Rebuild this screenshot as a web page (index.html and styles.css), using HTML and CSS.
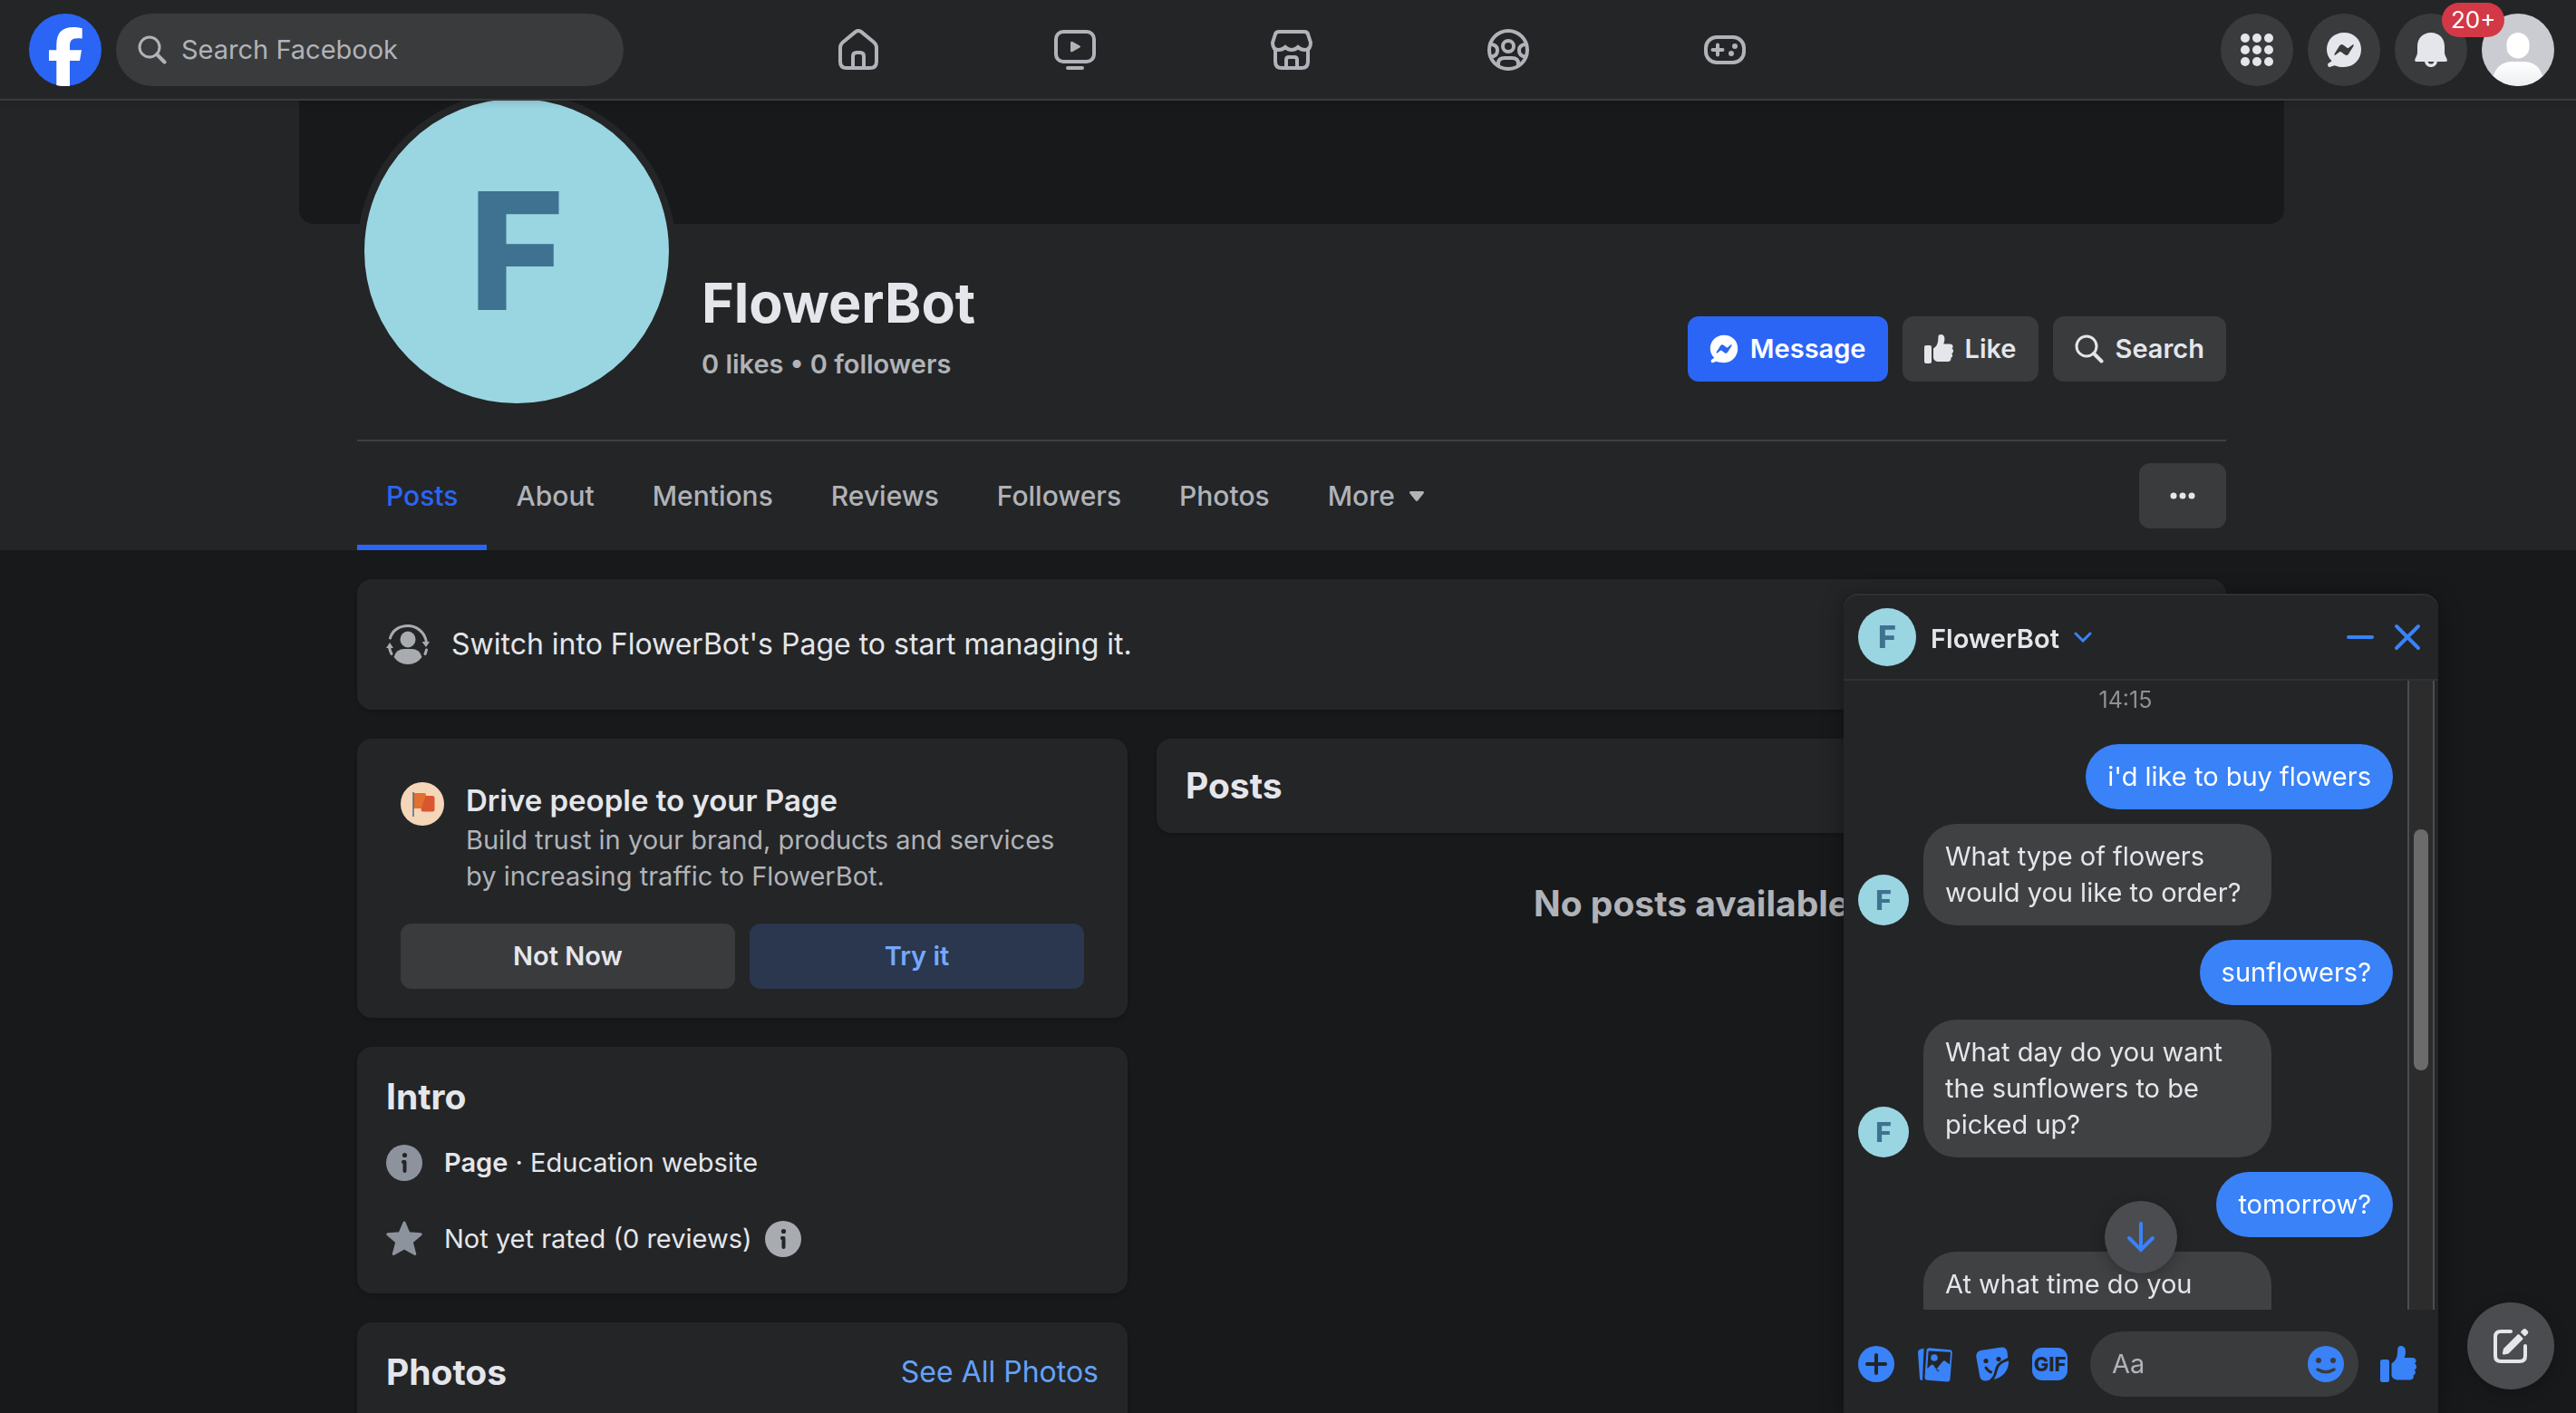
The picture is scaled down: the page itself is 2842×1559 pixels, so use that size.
FILE: index.html
```html
<!DOCTYPE html>
<html lang="en">
<head>
<meta charset="utf-8">
<meta name="viewport" content="width=device-width, initial-scale=1">
<title>FlowerBot | Facebook</title>
<link rel="stylesheet" href="styles.css">
</head>
<body>
<svg class="defs" aria-hidden="true">
  <symbol id="i-search" viewBox="0 0 32 32"><circle cx="13" cy="13" r="11" fill="none" stroke="currentColor" stroke-width="3"/><path d="M21 21l8.500 8.500" stroke="currentColor" stroke-width="4" stroke-linecap="round"/></symbol>
  <symbol id="i-messenger" viewBox="0 0 40 40"><path fill="currentColor" fill-rule="evenodd" d="M20 1C9 1 1 9 1 19.500c0 5.500 2.200 9.500 5.600 12.800L2 35.500l.5 2.500q.3 1.200 1.600 1l5.600-1.700C12.800 38.700 16.300 39 20 39c11 0 19-8.600 19-19.500S31 1 20 1ZM9.500 24.400l5.600-8.900a3 3 0 0 1 4.300-.8l4 3a1.500 1.500 0 0 0 1.700 0l4.300-3.300c.8-.6 1.800.3 1.300 1.200l-5.600 8.800a3 3 0 0 1-4.300.8l-4-3a1.500 1.500 0 0 0-1.700 0l-4.300 3.400c-.8.600-1.800-.3-1.300-1.200Z"/></symbol>
  <symbol id="i-thumb" viewBox="0 0 40 40"><rect x="0" y="15" width="10" height="25" rx="2.500" fill="currentColor"/><path fill="currentColor" d="M12.500 19.500c4.500-3 6-6.500 6.500-11.500l.3-5C19.500 1 21 0 22.700 0c3.500 0 5.300 2.500 5.300 6 0 2.500-.6 5-1.400 7H35c3 0 4.500 1.500 4.500 3.500 0 1.400-.7 2.400-1.500 3 1.300.7 2 1.900 2 3.400 0 1.800-1 3-2.300 3.500.8.700 1.200 1.600 1.200 2.700 0 1.700-1 2.900-2.400 3.300.2.500.3 1 .3 1.500 0 2-1.600 3.600-4 3.600H20c-4.500 0-7.500-2.200-7.500-6Z"/></symbol>
  <symbol id="i-info" viewBox="0 0 40 40"><circle cx="20" cy="20" r="20" fill="currentColor"/><g class="cut-fill"><circle cx="20.500" cy="11.500" r="2.600"/><path d="M18.500 17h2q2 0 2 2v10q0 2-2 2t-2-2v-8q-1.500 0-1.500-2t1.500-2Z"/></g></symbol>
</svg>

<header class="topbar">
  <div class="topbar-left">
    <a class="logo" href="#" aria-label="Facebook">
      <svg viewBox="0 0 80 80"><circle cx="40" cy="40" r="40" fill="#2b65f6"/><path fill="#fff" d="M30.300 79V52H22V40.200h8.300v-5.400C30.300 21 36.500 15 48.700 15c3.200 0 7 .5 10 1.200V27.500c-1.500-.2-3.500-.3-5.500-.3-6 0-8.200 2.800-8.200 8.500v4.500h13L56 52H45v27.700q-7.500 1-14.700-.7Z"/></svg>
    </a>
    <label class="search"><svg class="ico-search"><use href="#i-search"/></svg><input type="search" placeholder="Search Facebook" aria-label="Search Facebook"></label>
  </div>
  <nav class="topnav" aria-label="Main">
    <a href="#" aria-label="Home"><svg width="44" height="46" viewBox="0 0 44 46"><path d="M18.500 3.400 5 14.500Q2 17 2 20.500V36q0 7 7 7h26q7 0 7-7V20.500q0-3.500-3-6L25.500 3.400q-3.500-2.800-7 0Z"/><path d="M16 43V30q0-4 4-4h4q4 0 4 4v13"/></svg></a>
    <a href="#" aria-label="Video"><svg width="46" height="44" viewBox="0 0 46 44"><rect x="2" y="2" width="42" height="33" rx="8"/><path d="M15 42h16"/><path class="solid" d="M18 14.500q0-2.500 2.300-1.400l8 4.500q1.800 1 0 2l-8 4.500Q18 25.300 18 22.800Z"/></svg></a>
    <a href="#" aria-label="Marketplace"><svg width="46" height="44" viewBox="0 0 46 44"><path d="M9 2h28q3.500 0 4.300 3.500L44 14q0 8-6.500 8-4.500 0-7.500-3-3 3-7 3t-7-3q-3 3-7.500 3Q2 22 2 14L4.700 5.500Q5.500 2 9 2Z"/><path d="M5 21v14q0 7 7 7h22q7 0 7-7V21M17 42v-9q0-3 3-3h6q3 0 3 3v9"/></svg></a>
    <a href="#" aria-label="Groups"><svg width="46" height="46" viewBox="0 0 46 46"><circle cx="23" cy="23" r="21"/><circle cx="23" cy="19" r="6"/><path d="M12 40v-2q0-6 7-6h8q7 0 7 6v2M3 17q8 0 8 6.500T4 30.500M43 17q-8 0-8 6.500t7 7"/></svg></a>
    <a href="#" aria-label="Gaming"><svg width="46" height="32" viewBox="0 0 46 32"><rect x="2" y="2" width="42" height="28" rx="12"/><path d="M15 10.500v11M9.500 16h11"/><circle class="solid" cx="34" cy="12" r="3"/><circle class="solid" cx="30" cy="20" r="3"/></svg></a>
  </nav>
  <div class="topbar-right">
    <button class="round" aria-label="Menu"><svg width="36" height="36" viewBox="0 0 36 36"><g fill="currentColor"><circle cx="5" cy="5" r="5"/><circle cx="18" cy="5" r="5"/><circle cx="31" cy="5" r="5"/><circle cx="5" cy="18" r="5"/><circle cx="18" cy="18" r="5"/><circle cx="31" cy="18" r="5"/><circle cx="5" cy="31" r="5"/><circle cx="18" cy="31" r="5"/><circle cx="31" cy="31" r="5"/></g></svg></button>
    <button class="round" aria-label="Messenger"><svg width="40" height="40"><use href="#i-messenger"/></svg></button>
    <button class="round" aria-label="Notifications"><svg width="36" height="38" viewBox="0 0 36 38"><path fill="currentColor" d="M18 0C9 0 3 6.500 3 15v7q0 2-1.200 4.200L.3 29.500Q-.3 32 2 32h32q2.300 0 1.700-2.500l-1.500-3.300Q33 24 33 22v-7C33 6.500 27 0 18 0Z"/><path fill="none" stroke="currentColor" stroke-width="3.500" d="M12.500 31q1 5.300 5.500 5.300t5.500-5.300"/></svg><span class="badge">20+</span></button>
    <button class="round" aria-label="Your profile"><svg width="80" height="80" viewBox="0 0 80 80"><defs><clipPath id="face"><circle cx="40" cy="40" r="40"/></clipPath><linearGradient id="torso" x2="0" y2="1"><stop offset="0" stop-color="#fff"/><stop offset="1" stop-color="#eceef1"/></linearGradient></defs><g clip-path="url(#face)"><rect width="80" height="80" fill="#cbccd2"/><rect x="27.500" y="21" width="25" height="28.500" rx="12.500" fill="#fff"/><path fill="url(#torso)" d="M12 72q4-19 22-19h12q18 0 22 19v8H12Z"/></g></svg></button>
  </div>
</header>

<main class="page">
  <section class="hero">
    <div class="cover"></div>
    <div class="wrap">
      <div class="profile">
        <div class="avatar avatar-xl">F</div>
        <div class="profile-name">
          <h1>FlowerBot</h1>
          <p>0 likes • 0 followers</p>
        </div>
        <div class="actions">
          <button class="btn btn-primary"><svg><use href="#i-messenger"/></svg>Message</button>
          <button class="btn"><svg><use href="#i-thumb"/></svg>Like</button>
          <button class="btn"><svg><use href="#i-search"/></svg>Search</button>
        </div>
      </div>
      <div class="tabbar">
        <nav class="tabs" aria-label="Page sections">
          <a class="active" href="#">Posts</a><a href="#">About</a><a href="#">Mentions</a><a href="#">Reviews</a><a href="#">Followers</a><a href="#">Photos</a><a href="#">More<svg width="16" height="11" viewBox="0 0 16 11"><path fill="currentColor" d="M2 0h12q3 0 1.500 2.500L9.500 10q-1.500 2-3 0L.5 2.500Q-1 0 2 0Z"/></svg></a>
        </nav>
        <button class="btn btn-more" aria-label="More options"><svg viewBox="0 0 32 32"><g fill="currentColor"><circle cx="6" cy="16" r="3.500"/><circle cx="16" cy="16" r="3.500"/><circle cx="26" cy="16" r="3.500"/></g></svg></button>
      </div>
    </div>
  </section>

  <div class="content">
    <section class="card switch">
      <svg width="48" height="48" viewBox="0 0 48 48"><ellipse cx="24" cy="18.500" rx="8.500" ry="9" fill="currentColor"/><path fill="currentColor" d="M8.500 38Q11 29 20 29h8q9 0 11.500 9-6 8-15.500 8T8.500 38Z"/><path fill="none" stroke="currentColor" stroke-width="3" stroke-linecap="round" d="M4.500 17C7 8 15 3.500 24 3.500S43 10 44.500 22M3.500 27q.5 4 2.500 7.500M44.500 30q-.5 2.500-1.500 4.500"/><path fill="currentColor" d="M39.500 21h8.500l-4 6ZM0 28h8l-4-6Z"/></svg>
      <p>Switch into FlowerBot's Page to start managing it.</p>
    </section>
    <div class="columns">
      <div class="side">
        <section class="card promo">
          <div class="promo-text">
            <svg width="48" height="48" viewBox="0 0 48 48"><circle cx="24" cy="24" r="24" fill="#f5d6b9"/><path fill="#e2702f" d="M14 12h12q2 0 2 2v13q0 2-2 2H14Z"/><path fill="#d9572f" d="M27.500 15H35q2.500 0 2.500 2.500V30q0 2.500-2.500 2.500H25q-3 0-2.300-3Z"/><path stroke="#3f7192" stroke-width="1.500" d="M14 11v27"/></svg>
            <div>
              <h2>Drive people to your Page</h2>
              <p>Build trust in your brand, products and services<br>by increasing traffic to FlowerBot.</p>
            </div>
          </div>
          <div class="promo-actions">
            <button class="btn">Not Now</button>
            <button class="btn btn-tint">Try it</button>
          </div>
        </section>
        <section class="card intro">
          <h2>Intro</h2>
          <ul>
            <li><svg class="slate"><use href="#i-info"/></svg><span><strong>Page</strong> · Education website</span></li>
            <li><svg class="slate" viewBox="0 0 40 40"><path fill="currentColor" stroke="currentColor" stroke-width="3" stroke-linejoin="round" d="M20 2l5 11.800 13.200 1-10 8.600L31.700 36.500 20 30 8.300 36.500l3.500-13.100-10-8.600 13.200-1Z"/></svg><span>Not yet rated (0 reviews)</span><svg class="tip"><use href="#i-info"/></svg></li>
          </ul>
        </section>
        <section class="card photos">
          <h2>Photos</h2>
          <a href="#">See All Photos</a>
        </section>
      </div>
      <div class="feed">
        <section class="card feed-head"><h2>Posts</h2></section>
        <p class="empty">No posts available</p>
      </div>
    </div>
  </div>
</main>

<section class="chat" aria-label="Chat with FlowerBot">
  <header class="chat-head">
    <div class="avatar avatar-m">F</div>
    <h2>FlowerBot</h2>
    <svg class="chev" width="20" height="12" viewBox="0 0 20 12"><path d="M2 2l8 8 8-8"/></svg>
    <button class="plain" aria-label="Minimise"><svg width="32" height="32" viewBox="0 0 32 32"><path d="M3 16h26"/></svg></button>
    <button class="plain" aria-label="Close"><svg width="32" height="32" viewBox="0 0 32 32"><path d="M4 4l24 24M28 4L4 28"/></svg></button>
  </header>
  <div class="chat-body">
    <div class="messages">
      <time>14:15</time>
      <div class="msg mine"><p>i'd like to buy flowers</p></div>
      <div class="msg"><div class="avatar avatar-s">F</div><p>What type of flowers<br>would you like to order?</p></div>
      <div class="msg mine"><p>sunflowers?</p></div>
      <div class="msg"><div class="avatar avatar-s">F</div><p>What day do you want<br>the sunflowers to be<br>picked up?</p></div>
      <div class="msg mine"><p>tomorrow?</p></div>
      <div class="msg follow"><p>At what time do you</p></div>
    </div>
    <div class="scrollbar"><div class="thumb"></div></div>
    <button class="jump" aria-label="Scroll to latest"><svg width="32" height="34" viewBox="0 0 32 34"><path d="M16 2v29M3 18l13 13 13-13"/></svg></button>
  </div>
  <footer class="composer">
    <button class="plain" aria-label="More actions"><svg viewBox="0 0 40 40"><circle cx="20" cy="20" r="20" fill="currentColor"/><path class="cut" d="M20 10v20M10 20h20"/></svg></button>
    <button class="plain" aria-label="Attach a photo"><svg viewBox="0 0 40 40"><path fill="currentColor" d="M4 4l4.500-1.500L7 38q-2.500.5-3-2L2 7.500Q1.800 4.800 4 4Z"/><path fill="currentColor" fill-rule="evenodd" d="M14.500 2.200 37 4.200q3 .3 2.800 3.300L37.500 36.500q-.3 3.300-3.500 3l-21.500-1.700q-3.200-.3-3-3.500L11.500 5q.3-3 3-2.800ZM14.500 5.500q-1 0-1 1L12.300 25l4.200-4q1.500-1 2.500.3l2.500 3.400 3 1.800q1.300 1.500 0 2l-2.500-2.500 7.500-9q1.500-1.500 3 0L37 20.500 38 8q0-1.200-1.200-1.300Z"/><circle cx="20" cy="13" r="3.800" fill="currentColor"/></svg></button>
    <button class="plain" aria-label="Choose a sticker"><svg viewBox="0 0 40 40"><path fill="currentColor" d="M7 5 30 1.500q5.500-.5 6.500 5l.8 6.500C28 17 24.500 20 23 26c-1 5-2.500 9-6 11.500-5 2-10 1-10.800-4L2.300 12Q2 6.500 7 5ZM38 16.500c.5 9-5 18-16.300 20.500C25 32 25 29 26.500 25c2-5 6-7 11.500-8.500Z"/><circle class="dot" cx="13" cy="16.500" r="2.600"/><circle class="dot" cx="27" cy="14.500" r="2.600"/><path class="cut thin" d="M13 24q2 3.500 5.500 5"/></svg></button>
    <button class="plain" aria-label="Choose a GIF"><svg viewBox="0 0 40 40"><rect x="0" y="2" width="39" height="36" rx="11" fill="currentColor"/><text x="19.500" y="28" text-anchor="middle">GIF</text></svg></button>
    <label class="compose"><input type="text" placeholder="Aa" aria-label="Message"><svg viewBox="0 0 40 40"><circle cx="20" cy="20" r="20" fill="currentColor"/><g fill="#3a3b3c"><circle cx="12" cy="16" r="3"/><circle cx="28" cy="16" r="3"/></g><path fill="none" stroke="#3a3b3c" stroke-width="3.500" stroke-linecap="round" d="M11 26q9 5.500 18 0"/></svg></label>
    <button class="plain" aria-label="Send a like"><svg viewBox="0 0 40 40"><use href="#i-thumb"/></svg></button>
  </footer>
</section>

<button class="fab" aria-label="New message"><svg width="40" height="40" viewBox="0 0 40 40"><path fill="none" stroke="currentColor" stroke-width="4" stroke-linecap="round" d="M20 4H9Q3 4 3 10v21q0 6 6 6h21q6 0 6-6V20"/><path fill="currentColor" d="M12 23 27.500 7.500q1-1 2 0l3.500 3.500q1 1 0 2L17.500 28.500 13 29.500q-2.500.5-2-2ZM31.500 3.800l1.800-1.800q2-2 4 0l1 1q2 2 0 4l-1.800 1.800q-1 .8-1.800 0l-3.200-3.200q-.8-.9 0-1.800Z"/></svg></button>
</body>
</html>
```
FILE: styles.css
```css
:root {
  --bg: #18191a;
  --surface: #242527;
  --control: #3a3b3d;
  --line: #3e4042;
  --text: #e4e6eb;
  --muted: #b0b3b8;
  --brand: #2b65f6;
  --chat: #3982f8;
  --body: 29px;
  --tab: 30px;
  --lead: 32px;
  --title: 33px;
  --heading: 39px;
}

* {
  box-sizing: border-box;
}

body {
  margin: 0;
  height: 100vh;
  overflow: hidden;
  display: flex;
  flex-direction: column;
  background: var(--bg);
  color: var(--text);
  font: 400 var(--body)/40px Inter, "Liberation Sans", sans-serif;
}

h1, h2, p, ul {
  margin: 0;
  padding: 0;
}

ul {
  list-style: none;
}

a {
  color: inherit;
  text-decoration: none;
}

button, input {
  font: inherit;
  color: inherit;
  border: 0;
  padding: 0;
  background: none;
}

input {
  min-width: 0;
  flex: 1;
  outline: 0;
  appearance: none;
}

input::placeholder {
  color: var(--muted);
  opacity: 1;
}

svg {
  display: block;
  flex: none;
}

.defs {
  position: absolute;
  width: 0;
  height: 0;
}

/* Top bar */

.topbar {
  position: relative;
  z-index: 2;
  flex: none;
  display: grid;
  grid-template-columns: 1fr auto 1fr;
  align-items: center;
  padding: 15px 24px 14px 32px;
  background: var(--surface);
  border-bottom: 2px solid var(--control);
  box-shadow: 0 2px 8px rgba(0, 0, 0, .15);
}

.topbar-left {
  display: flex;
  gap: 16px;
}

.logo svg {
  width: 80px;
  height: 80px;
}

.search {
  display: flex;
  align-items: center;
  gap: 16px;
  width: 560px;
  height: 80px;
  padding: 0 24px;
  border-radius: 40px;
  background: var(--control);
  color: var(--muted);
}

.ico-search {
  width: 32px;
  height: 32px;
}

.topnav {
  display: flex;
}

.topnav a {
  display: flex;
  justify-content: center;
  align-items: center;
  width: 239px;
  height: 80px;
  color: var(--muted);
}

.topnav svg {
  fill: none;
  stroke: currentColor;
  stroke-width: 4;
  stroke-linecap: round;
}

.topnav .solid {
  fill: currentColor;
  stroke: none;
}

.topbar-right {
  display: flex;
  justify-content: flex-end;
  gap: 16px;
}

.round {
  position: relative;
  display: flex;
  justify-content: center;
  align-items: center;
  width: 80px;
  height: 80px;
  border-radius: 50%;
  background: var(--control);
}

.badge {
  position: absolute;
  z-index: 1;
  top: -12px;
  left: 52px;
  padding: 0 10px;
  border-radius: 19px;
  background: #d33846;
  color: #fff;
  font-size: 26px;
  line-height: 38px;
}

/* Page header */

.page {
  flex: 1;
  min-height: 0;
}

.hero {
  padding-left: 8px;
  background: var(--surface);
}

.cover {
  max-width: 2190px;
  height: 136px;
  margin: 0 auto;
  border-radius: 0 0 16px 16px;
  background: var(--bg);
}

.wrap {
  max-width: 2062px;
  margin: 0 auto;
}

.profile {
  display: flex;
  align-items: flex-end;
  gap: 28px;
  margin-top: -146px;
  padding-bottom: 32px;
  border-bottom: 2px solid var(--line);
}

.avatar {
  display: flex;
  flex: none;
  justify-content: center;
  align-items: center;
  border-radius: 50%;
  background: #9ad5e2;
  color: #3f7190;
  font-weight: 800;
}

.avatar-xl {
  width: 352px;
  height: 352px;
  border: 8px solid var(--surface);
  font-size: 180px;
}

.avatar-m {
  width: 64px;
  height: 64px;
  font-size: 34px;
}

.avatar-s {
  width: 56px;
  height: 56px;
  font-size: 30px;
}

.profile-name {
  flex: 1;
  padding-bottom: 31px;
}

.profile-name h1 {
  margin-bottom: 10px;
  font-size: 61px;
  line-height: 76px;
  font-weight: 700;
}

.profile-name p {
  color: var(--muted);
  font-weight: 600;
}

.actions {
  display: flex;
  gap: 16px;
  padding-bottom: 32px;
}

.btn {
  display: flex;
  justify-content: center;
  align-items: center;
  gap: 13px;
  height: 72px;
  padding: 0 24px;
  border-radius: 12px;
  background: var(--control);
  font-weight: 600;
}

.btn svg {
  width: 32px;
  height: 32px;
}

.btn-primary {
  background: var(--brand);
  color: #fff;
}

.btn-more {
  width: 96px;
}

.btn-tint {
  background: #2a374f;
  color: #74a9fb;
}

.tabbar {
  display: flex;
  justify-content: space-between;
  align-items: center;
  height: 120px;
}

.tabs {
  display: flex;
  align-self: stretch;
}

.tabs a {
  display: flex;
  align-items: center;
  gap: 16px;
  padding: 0 32px;
  color: var(--muted);
  font-size: var(--tab);
  font-weight: 500;
}

.tabs .active {
  color: var(--brand);
  box-shadow: inset 0 -6px var(--brand);
}

/* Content cards */

.content {
  display: grid;
  gap: 32px;
  box-sizing: content-box;
  max-width: 2062px;
  margin: 0 auto;
  padding: 32px 0 0 8px;
}

.card {
  border-radius: 16px;
  background: var(--surface);
  box-shadow: 0 2px 4px rgba(0, 0, 0, .2);
}

.switch {
  display: flex;
  align-items: center;
  gap: 24px;
  height: 144px;
  padding: 0 32px;
  font-size: var(--lead);
}

.switch svg {
  color: #a8abaf;
}

.columns {
  display: grid;
  grid-template-columns: 850px 1fr;
  align-items: start;
  gap: 32px;
}

.side {
  display: grid;
  gap: 32px;
}

.card h2 {
  font-size: var(--heading);
  line-height: 48px;
  font-weight: 700;
}

.promo {
  padding: 48px 48px 32px;
}

.promo-text {
  display: flex;
  gap: 24px;
  margin-bottom: 32px;
}

.card.promo h2 {
  margin-bottom: 4px;
  font-size: var(--title);
  line-height: 40px;
  font-weight: 600;
}

.promo p {
  color: var(--muted);
}

.promo-actions {
  display: grid;
  grid-template-columns: 1fr 1fr;
  gap: 16px;
}

.intro {
  padding: 31px 32px 40px;
}

.intro ul {
  display: grid;
  gap: 44px;
  margin-top: 29px;
}

.intro li {
  display: flex;
  align-items: center;
}

.intro li svg {
  width: 40px;
  height: 40px;
}

.intro strong {
  font-weight: 600;
}

.slate {
  margin-right: 24px;
  color: #8c939d;
}

.tip {
  margin-left: 14px;
  color: #a8abaf;
}

.cut-fill {
  fill: var(--surface);
}

.photos {
  display: flex;
  justify-content: space-between;
  align-items: flex-start;
  min-height: 320px;
  padding: 31px 32px;
}

.photos a {
  color: #64a2fa;
  font-size: var(--lead);
  line-height: 48px;
}

.feed-head {
  padding: 28px 32px;
}

.empty {
  margin-top: 54px;
  color: var(--muted);
  font-size: var(--heading);
  line-height: 48px;
  font-weight: 700;
  text-align: center;
}

/* Chat window docked over the page */

.chat {
  position: fixed;
  z-index: 3;
  right: 152px;
  bottom: 0;
  display: flex;
  flex-direction: column;
  width: 656px;
  height: 904px;
  border-radius: 16px 16px 0 0;
  background: var(--surface);
  box-shadow: 0 4px 24px rgba(0, 0, 0, .4), inset 0 2px rgba(255, 255, 255, .05);
}

.chat-head {
  display: flex;
  align-items: center;
  height: 96px;
  padding: 2px 18px 0 16px;
  border-bottom: 2px solid #303133;
}

.chat-head h2 {
  margin: 0 16px;
  padding-top: 4px;
  font-size: var(--body);
  line-height: 40px;
  font-weight: 600;
}

.chat-head .chev {
  margin-right: auto;
}

.chat-head svg {
  fill: none;
  stroke: var(--chat);
  stroke-width: 4;
  stroke-linecap: round;
}

.chat-head .chev {
  stroke-width: 3;
}

.plain {
  color: var(--chat);
}

.chat-head .plain + .plain {
  margin-left: 20px;
}

.chat-body {
  position: relative;
  flex: 1;
  min-height: 0;
  display: flex;
  padding-right: 4px;
}

.messages {
  flex: 1;
  display: flex;
  flex-direction: column;
  gap: 16px;
  padding: 6px 16px 0;
  overflow: hidden;
}

.messages time {
  margin-bottom: 18px;
  color: #8e9095;
  font-size: 25px;
  line-height: 30px;
  text-align: center;
}

.msg {
  display: flex;
  flex: none;
  align-items: flex-end;
  gap: 16px;
}

.msg p {
  padding: 16px 24px;
  border-radius: 36px;
  background: #404143;
}

.msg:not(.mine) p {
  width: 384px;
}

.mine {
  justify-content: flex-end;
}

.msg.mine p {
  background: var(--chat);
  color: #fff;
}

.follow {
  padding-left: 72px;
}

.follow p {
  padding-bottom: 56px;
}

.scrollbar {
  width: 30px;
  padding-top: 164px;
  border: solid #4c4d4e;
  border-width: 0 2px;
  background: #2c2c2d;
}

.thumb {
  width: 16px;
  height: 266px;
  margin: 0 auto;
  border-radius: 8px;
  background: #6b6b6b;
}

.jump, .fab {
  display: flex;
  justify-content: center;
  align-items: center;
  border-radius: 50%;
  background: #4b4c4f;
  box-shadow: 0 4px 16px rgba(0, 0, 0, .25);
}

.jump {
  position: absolute;
  left: 288px;
  bottom: 40px;
  width: 80px;
  height: 80px;
}

.jump svg {
  fill: none;
  stroke: var(--chat);
  stroke-width: 4;
  stroke-linecap: round;
}

.fab {
  position: fixed;
  right: 24px;
  bottom: 26px;
  width: 96px;
  height: 96px;
}

.composer {
  display: flex;
  align-items: center;
  gap: 24px;
  padding: 24px 24px 18px 16px;
}

.composer svg {
  width: 40px;
  height: 40px;
}

.composer .cut {
  fill: none;
  stroke: var(--surface);
  stroke-width: 4;
  stroke-linecap: round;
}

.composer .thin {
  stroke-width: 3;
}

.composer .dot {
  fill: var(--surface);
}

.composer text {
  fill: var(--surface);
  font: 800 22px Inter, sans-serif;
}

.compose {
  display: flex;
  flex: 1;
  min-width: 0;
  align-items: center;
  height: 72px;
  padding: 0 16px 0 24px;
  border-radius: 36px;
  background: var(--control);
  color: var(--chat);
}
```
